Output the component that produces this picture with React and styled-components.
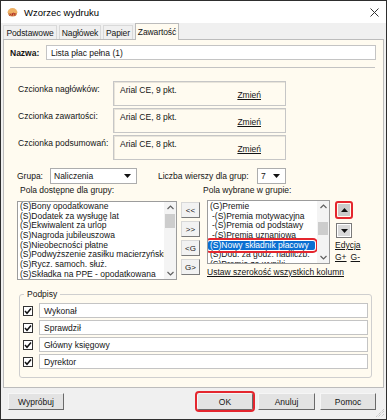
import React from 'react'
import styled, { createGlobalStyle } from 'styled-components'

const tabs = [
    { label: 'Podstawowe', w: 54 },
    { label: 'Nagłówek', w: 42 },
    { label: 'Papier', w: 30 },
    { label: 'Zawartość', w: 44, active: true },
]

const leftItems = [
    '(S)Bony opodatkowane',
    '(S)Dodatek za wysługę lat',
    '(S)Ekwiwalent za urlop',
    '(S)Nagroda jubileuszowa',
    '(S)Nieobecności płatne',
    '(S)Podwyższenie zasiłku macierzyńskiego',
    '(S)Rycz. samoch. służ.',
    '(S)Składka na PPE - opodatkowana',
]

const rightItems = [
    { text: '(G)Premie' },
    { text: '-(S)Premia motywacyjna', indent: true },
    { text: '-(S)Premia od podstawy', indent: true },
    { text: '-(S)Premia uznaniowa', indent: true },
    { text: '(S)Nowy składnik płacowy', selected: true },
    { text: '(S)Dod. za godz. nadliczb.' },
    { text: '(S)Premia za wyniki' },
]

const fonts = [
    { label: 'Czcionka nagłówków:', value: 'Arial CE, 9 pkt.' },
    { label: 'Czcionka zawartości:', value: 'Arial CE, 8 pkt.' },
    { label: 'Czcionka podsumowań:', value: 'Arial CE, 8 pkt.' },
]

const signatures = ['Wykonał', 'Sprawdził', 'Główny księgowy', 'Dyrektor']

const ChevronUp = () => (
    <svg width="7" height="5" viewBox="0 0 7 5">
        <polyline points="0.5,4 3.5,1 6.5,4" fill="none" stroke="#606060" strokeWidth="1.2" />
    </svg>
)

const ChevronDown = () => (
    <svg width="7" height="5" viewBox="0 0 7 5">
        <polyline points="0.5,1 3.5,4 6.5,1" fill="none" stroke="#606060" strokeWidth="1.2" />
    </svg>
)

const DropTriangle = () => (
    <svg width="7" height="4" viewBox="0 0 7 4">
        <polygon points="0,0 7,0 3.5,4" fill="#111" />
    </svg>
)

function Scroll({ top, size }) {
    return (
        <ScrollBar>
            <ArrowBox><ChevronUp /></ArrowBox>
            <Thumb $top={top} $size={size} />
            <Spacer />
            <ArrowBox><ChevronDown /></ArrowBox>
        </ScrollBar>
    )
}

export default function App() {
    return (
        <Window>
            <GlobalStyle />

            <TitleBar>
                <svg width="11" height="11" viewBox="0 0 11 11">
                    <path d="M0.5 6 A5 5 0 0 1 10.5 6 Z" fill="#eeb064" />
                    <path d="M1 6 h9 a4.5 3.5 0 0 1 -9 0 Z" fill="#d38a4a" />
                    <path d="M2.5 8.5 q1 -2.5 2 0 M5.5 8.5 v-2 q1 -0.6 1.6 0 M7.8 6 v2.6" fill="none" stroke="#b3282a" strokeWidth="1" />
                </svg>
                <Title>Wzorzec wydruku</Title>
                <Close>
                    <svg width="9" height="9" viewBox="0 0 9 9">
                        <path d="M0.5 0.5 L8.5 8.5 M8.5 0.5 L0.5 8.5" stroke="#333" strokeWidth="1" />
                    </svg>
                </Close>
            </TitleBar>

            <TabStrip>
                {tabs.map(t => (
                    <Tab key={t.label} $w={t.w} $active={t.active}>{t.label}</Tab>
                ))}
            </TabStrip>

            <Panel>
                <NameRow>
                    <NameLabel>Nazwa:</NameLabel>
                    <TextField $w={330}>Lista płac pełna (1)</TextField>
                </NameRow>

                <Divider />

                <FontList>
                    {fonts.map(f => (
                        <FontRow key={f.label}>
                            <FontLabel>{f.label}</FontLabel>
                            <FontBox>
                                <span>{f.value}</span>
                                <Link $pr={24}>Zmień</Link>
                            </FontBox>
                        </FontRow>
                    ))}
                </FontList>

                <GroupRow>
                    <GroupLabel>Grupa:</GroupLabel>
                    <Select $w={87}>
                        <span>Naliczenia</span>
                        <DropTriangle />
                    </Select>
                    <RowsLabel>Liczba wierszy dla grup:</RowsLabel>
                    <Select $w={29}>
                        <span>7</span>
                        <DropTriangle />
                    </Select>
                </GroupRow>

                <CaptionRow>
                    <Caption $w={183}>Pola dostępne dla grupy:</Caption>
                    <Caption>Pola wybrane w grupie:</Caption>
                </CaptionRow>

                <ListsRow>
                    <ListBox $w={160} $h={79} $mt={1}>
                        <Items $pt={0}>
                            {leftItems.map(t => <Item key={t}>{t}</Item>)}
                        </Items>
                        <Scroll top={1} size={14} />
                    </ListBox>

                    <MoveColumn>
                        <SmallButton>&lt;&lt;</SmallButton>
                        <SmallButton>&gt;&gt;</SmallButton>
                        <SmallButton>&lt;G</SmallButton>
                        <SmallButton>G&gt;</SmallButton>
                    </MoveColumn>

                    <SelectedColumn>
                        <ListBox $w={123} $h={64}>
                            <Items $pt={1}>
                                {rightItems.map(i => (
                                    <Item key={i.text} $indent={i.indent} $selected={i.selected}>{i.text}</Item>
                                ))}
                            </Items>
                            <Scroll top={10} size={13} />
                        </ListBox>
                        <WideLink>Ustaw szerokość wszystkich kolumn</WideLink>
                    </SelectedColumn>

                    <OrderColumn>
                        <UpButton>
                            <UpInner>
                                <svg width="7" height="4" viewBox="0 0 7 4">
                                    <polygon points="0,4 7,4 3.5,0" fill="#111" />
                                </svg>
                            </UpInner>
                        </UpButton>
                        <DownButton>
                            <DropTriangle />
                        </DownButton>
                        <Link $mt={2}>Edycja</Link>
                        <LinkPair>
                            <Link>G+</Link>
                            <Link>G-</Link>
                        </LinkPair>
                    </OrderColumn>
                </ListsRow>

                <Fieldset>
                    <Legend>Podpisy</Legend>
                    {signatures.map(s => (
                        <SignRow key={s}>
                            <CheckBox>
                                <svg width="8" height="8" viewBox="0 0 8 8">
                                    <path d="M1 4 L3 6.3 L7 1.5" fill="none" stroke="#111" strokeWidth="1.5" />
                                </svg>
                            </CheckBox>
                            <TextField $w={329}>{s}</TextField>
                        </SignRow>
                    ))}
                </Fieldset>
            </Panel>

            <Footer>
                <Button>Wypróbuj</Button>
                <Button $w={56} $marked $push>OK</Button>
                <Button $w={57}>Anuluj</Button>
                <Button $w={56}>Pomoc</Button>
                <Grip>
                    <svg width="9" height="9" viewBox="0 0 9 9">
                        <path d="M8 2 L2 8 M8 5 L5 8 M8 0 L0 8" stroke="#b5b5b5" strokeWidth="1" strokeDasharray="1 1" />
                    </svg>
                </Grip>
            </Footer>
        </Window>
    )
}

// Styled Components

const GlobalStyle = createGlobalStyle`
body {
    margin: 0;
    background: #fff;
    font-family: "Liberation Sans", Arial, sans-serif;
}
`

const Window = styled.div`
width: 387px;
height: 420px;
box-sizing: border-box;
border: 1px solid #2e2e2e;
background: #f0f0f0;
display: flex;
flex-direction: column;
font-size: 8.5px;
color: #141414;
position: relative;
overflow: hidden;
`

const TitleBar = styled.div`
height: 22px;
flex-shrink: 0;
background: #fff;
display: flex;
align-items: center;
padding-left: 6px;
`

const Title = styled.span`
margin-left: 6px;
font-size: 9.5px;
color: #000;
`

const Close = styled.span`
margin-left: auto;
margin-right: 7px;
display: flex;
`

const TabStrip = styled.div`
height: 16px;
flex-shrink: 0;
display: flex;
align-items: flex-end;
gap: 2px;
padding-left: 2px;
`

const Tab = styled.div`
position: relative;
z-index: 1;
box-sizing: border-box;
width: ${p => p.$w}px;
height: ${p => p.$active ? 17 : 14}px;
margin-bottom: ${p => p.$active ? -1 : 0}px;
letter-spacing: -0.1px;
white-space: nowrap;
display: flex;
align-items: center;
justify-content: center;
border: 1px solid ${p => p.$active ? '#bcbcbc' : '#d9d9d9'};
border-bottom: none;
background: ${p => p.$active ? '#fffbf0' : '#f0f0f0'};
`

const Panel = styled.div`
flex: 1;
min-height: 0;
margin: 0 2px;
border: 1px solid #bcbcbc;
background: #fffbf0;
display: flex;
flex-direction: column;
`

const NameRow = styled.div`
display: flex;
align-items: center;
margin-top: 5px;
padding-left: 6px;
`

const NameLabel = styled.span`
width: 36px;
font-weight: bold;
`

const TextField = styled.div`
width: ${p => p.$w}px;
height: 15px;
box-sizing: border-box;
border: 1px solid #c4c4c4;
background: #fff;
padding-left: 4px;
display: flex;
align-items: center;
white-space: nowrap;
`

const Divider = styled.div`
margin: 7px 0 0 6px;
width: 365px;
border-top: 1px solid #c3c3c3;
`

const FontList = styled.div`
display: flex;
flex-direction: column;
gap: 2px;
margin-top: 13px;
padding-left: 14px;
`

const FontRow = styled.div`
display: flex;
`

const FontLabel = styled.span`
width: 95px;
padding-top: 3px;
line-height: 10px;
`

const FontBox = styled.div`
width: 173px;
height: 25px;
box-sizing: border-box;
border: 1px solid #c6c6c6;
box-shadow: inset 1px 1px 0 #e8e4da;
padding: 3px 0 0 6px;
line-height: 10px;
display: flex;
justify-content: space-between;
align-items: flex-start;
`

const Link = styled.span`
text-decoration: underline;
line-height: 10px;
padding-right: ${p => p.$pr || 0}px;
margin-top: ${p => p.$mt || 0}px;
align-self: ${p => p.$pr ? 'center' : 'auto'};
white-space: nowrap;
`

const GroupRow = styled.div`
display: flex;
align-items: center;
height: 16px;
margin-top: 8px;
padding-left: 13px;
`

const GroupLabel = styled.span`
width: 33px;
`

const RowsLabel = styled.span`
width: 99px;
margin-left: 21px;
white-space: nowrap;
`

const Select = styled.div`
width: ${p => p.$w}px;
height: 16px;
box-sizing: border-box;
border: 1px solid #adadad;
background: #fff;
display: flex;
align-items: center;
justify-content: space-between;
padding: 0 5px 0 3px;
`

const CaptionRow = styled.div`
display: flex;
height: 10px;
line-height: 10px;
margin-top: 1px;
padding-left: 16px;
`

const Caption = styled.span`
width: ${p => p.$w ? `${p.$w}px` : 'auto'};
white-space: nowrap;
`

const ListsRow = styled.div`
display: flex;
align-items: flex-start;
margin-top: 5px;
padding-left: 13px;
`

const ListBox = styled.div`
width: ${p => p.$w}px;
height: ${p => p.$h}px;
margin-top: ${p => p.$mt || 0}px;
box-sizing: border-box;
border: 1px solid #9c9c9c;
background: #fff;
display: flex;
`

const Items = styled.div`
flex: 1;
min-width: 0;
overflow: hidden;
padding: ${p => p.$pt}px 2px 0 0;
`

const Item = styled.div`
height: 9.7px;
line-height: 9.7px;
white-space: nowrap;
padding-left: ${p => p.$indent ? 4 : 2}px;
background: ${p => p.$selected ? '#0a6fd1' : 'transparent'};
color: ${p => p.$selected ? '#fff' : '#141414'};
outline: ${p => p.$selected ? '2px solid #e4262e' : 'none'};
outline-offset: 1px;
border-radius: ${p => p.$selected ? 2 : 0}px;
`

const ScrollBar = styled.div`
width: 12px;
background: #f4f4f4;
display: flex;
flex-direction: column;
align-items: center;
`

const ArrowBox = styled.div`
height: 11px;
display: flex;
align-items: center;
justify-content: center;
`

const Thumb = styled.div`
width: 10px;
height: ${p => p.$size}px;
margin-top: ${p => p.$top}px;
background: #cdcdcd;
`

const Spacer = styled.div`
flex: 1;
`

const MoveColumn = styled.div`
display: flex;
flex-direction: column;
gap: 3px;
margin: 2px 0 0 4px;
`

const SmallButton = styled.div`
width: 19px;
height: 16px;
box-sizing: border-box;
border: 1px solid;
border-color: #d8d8d8 #7a7a7a #7a7a7a #d8d8d8;
background: #f2f2f2;
display: flex;
align-items: center;
justify-content: center;
font-size: 8px;
`

const SelectedColumn = styled.div`
display: flex;
flex-direction: column;
margin-left: 7px;
`

const WideLink = styled.span`
margin-top: 3px;
line-height: 10px;
text-decoration: underline;
white-space: nowrap;
width: 123px;
`

const OrderColumn = styled.div`
display: flex;
flex-direction: column;
margin-left: 5px;
margin-top: 1px;
`

const UpButton = styled.div`
width: 18px;
height: 18px;
box-sizing: border-box;
border: 2px solid #e4262e;
border-radius: 3px;
padding: 1px;
`

const UpInner = styled.div`
height: 100%;
background: #c9c9c9;
display: flex;
align-items: center;
justify-content: center;
`

const DownButton = styled.div`
width: 16px;
height: 15px;
margin: 4px 0 0 1px;
box-sizing: border-box;
border: 1px solid #7a7a7a;
box-shadow: inset 0 0 0 1px #fff;
background: #d9d9d9;
display: flex;
align-items: center;
justify-content: center;
`

const LinkPair = styled.div`
display: flex;
gap: 4px;
margin-top: 2px;
`

const Fieldset = styled.fieldset`
width: 353px;
box-sizing: border-box;
margin: 9px 0 0 15px;
padding: 4px 3px 8px 3px;
border: 1px solid #cfcfcf;
border-radius: 3px;
display: flex;
flex-direction: column;
gap: 2px;
`

const Legend = styled.legend`
margin-left: 1px;
padding: 0 3px;
line-height: 10px;
`

const SignRow = styled.div`
display: flex;
align-items: center;
gap: 6px;
`

const CheckBox = styled.div`
width: 10px;
height: 10px;
box-sizing: border-box;
border: 1px solid #333;
background: #fff;
display: flex;
align-items: center;
justify-content: center;
`

const Footer = styled.div`
height: 31px;
flex-shrink: 0;
box-sizing: border-box;
display: flex;
align-items: flex-start;
gap: 5px;
padding: 5px 10px 0 7px;
position: relative;
`

const Button = styled.div`
width: ${p => p.$w || 56}px;
height: 17px;
box-sizing: border-box;
margin-left: ${p => p.$push ? 'auto' : '0'};
border: 1px solid;
border-color: #f6f6f6 #6a6a6a #6a6a6a #f6f6f6;
background: #e3e3e3;
display: flex;
align-items: center;
justify-content: center;
outline: ${p => p.$marked ? '2px solid #e4262e' : 'none'};
outline-offset: 0;
border-radius: ${p => p.$marked ? 2 : 0}px;
`

const Grip = styled.div`
position: absolute;
right: 1px;
bottom: 1px;
display: flex;
`
